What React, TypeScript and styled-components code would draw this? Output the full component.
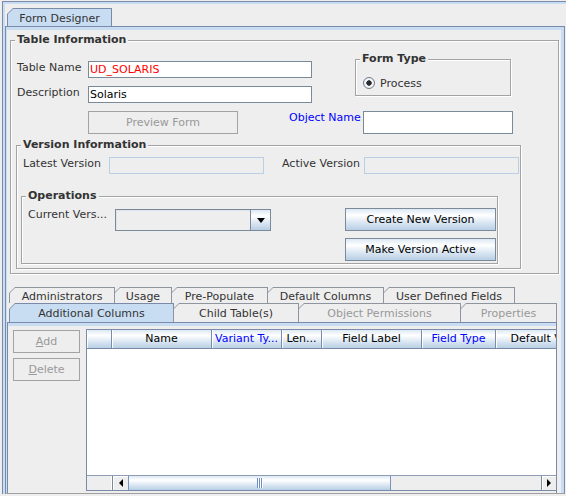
import styled, { createGlobalStyle } from 'styled-components'

const LINE = '#7a8aa8'
const CTRL = '#7a8a99'
const BAND = '#c8ddf2'
const PANEL = '#eeeeee'
const TEXT = '#333333'
const DISABLED = '#999999'
const ETCH = '#a3a3a3'
const OCEAN = 'linear-gradient(#dde8f3 0%, #ffffff 30%, #dde8f3 62%, #b8cfe5 100%)'

const GlobalStyle = createGlobalStyle`
  html, body {
    margin: 0;
    padding: 0;
    background: ${PANEL};
  }
  body {
    font-family: "DejaVu Sans", "Liberation Sans", sans-serif;
    font-size: 11px;
    color: ${TEXT};
  }
  * {
    box-sizing: border-box;
  }
`

const Screen = styled.div`
  width: 566px;
  height: 496px;
  overflow: hidden;
  background: ${PANEL};
`

const OuterPane = styled.div`
  width: 600px;
  margin: 1px 0 0 2px;
  border-top: 1px solid ${LINE};
  border-left: 1px solid ${LINE};
`

const OuterBand = styled.div`
  border-top: 2px solid ${BAND};
  border-left: 2px solid ${BAND};
`

const DesignerPane = styled.div`
  width: 560px;
`

const TabStrip = styled.div<{ $height: number }>`
  display: flex;
  align-items: flex-end;
  height: ${({ $height }) => $height}px;
  padding-left: 2px;
`

const TabEdge = styled.div<{ $width: number; $height: number; $selected?: boolean }>`
  flex: none;
  width: ${({ $width }) => $width}px;
  height: ${({ $height }) => $height}px;
  margin-right: -1px;
  padding: 1px 1px 0 1px;
  background: ${({ $selected }) => ($selected ? LINE : '#8e959e')};
  clip-path: polygon(0 6px, 6px 0, 100% 0, 100% 100%, 0 100%);
`

const TabFace = styled.div<{ $selected?: boolean; $disabled?: boolean }>`
  display: flex;
  align-items: center;
  justify-content: center;
  height: 100%;
  padding-top: 2px;
  line-height: 14px;
  white-space: nowrap;
  background: ${({ $selected }) => ($selected ? BAND : PANEL)};
  color: ${({ $disabled }) => ($disabled ? DISABLED : TEXT)};
  clip-path: polygon(0 5px, 5px 0, 100% 0, 100% 100%, 0 100%);
`

const DesignerContent = styled.div`
  border: 1px solid ${LINE};
  border-bottom-color: #a0a0a0;
`

const DesignerBand = styled.div`
  border-top: 3px solid ${BAND};
  border-left: 1px solid ${BAND};
  border-right: 3px solid ${BAND};
`

const DesignerInner = styled.div`
  width: 554px;
  height: 463px;
  padding-top: 10px;
`

const Group = styled.div<{ $width: number; $height: number }>`
  position: relative;
  flex: none;
  width: ${({ $width }) => $width}px;
  height: ${({ $height }) => $height}px;
  border: 1px solid ${ETCH};
  box-shadow: inset 1px 1px 0 #ffffff, 1px 1px 0 #ffffff;
`

const GroupTitle = styled.span`
  position: absolute;
  top: -8px;
  left: 4px;
  padding: 0 2px;
  background: ${PANEL};
  font-weight: bold;
  line-height: 14px;
  white-space: nowrap;
`

const TableInfo = styled(Group)`
  margin-left: 3px;
`

const TopSection = styled.div`
  display: flex;
  align-items: flex-start;
  height: 62px;
`

const LeftFields = styled.div`
  display: flex;
  flex-direction: column;
  gap: 8px;
  margin: 20px 0 0 6px;
`

const FormRow = styled.div`
  display: flex;
  align-items: flex-start;
`

const FieldLabel = styled.span<{ $width: number; $blue?: boolean }>`
  flex: none;
  width: ${({ $width }) => $width}px;
  line-height: 14px;
  white-space: nowrap;
  color: ${({ $blue }) => ($blue ? '#0000ff' : TEXT)};
`

const TextField = styled.div<{ $width: number; $height?: number; $red?: boolean }>`
  flex: none;
  width: ${({ $width }) => $width}px;
  height: ${({ $height }) => $height ?? 17}px;
  padding-left: 1px;
  border: 1px solid ${CTRL};
  background: #ffffff;
  line-height: 15px;
  white-space: nowrap;
  color: ${({ $red }) => ($red ? '#ff0000' : '#000000')};
`

const DisabledField = styled.div<{ $width: number }>`
  flex: none;
  width: ${({ $width }) => $width}px;
  height: 17px;
  border: 1px solid #b8cfe5;
  background: ${PANEL};
`

const FormTypeBox = styled(Group)`
  margin: 18px 0 0 43px;
`

const RadioRow = styled.div`
  display: flex;
  align-items: flex-start;
  margin: 17px 0 0 7px;
  line-height: 14px;
`

const Radio = styled.span`
  flex: none;
  width: 12px;
  height: 12px;
  margin-right: 5px;
  border: 1px solid #6e7c8c;
  border-radius: 50%;
  background: radial-gradient(circle at center, #2a2a2a 0 2.4px, #f6f8fb 3px, #dfe8f2 100%);
`

const ActionRow = styled.div`
  display: flex;
  align-items: flex-start;
  margin-top: 8px;
`

const Button = styled.div<{ $width: number; $disabled?: boolean }>`
  flex: none;
  display: flex;
  align-items: center;
  justify-content: center;
  width: ${({ $width }) => $width}px;
  height: 23px;
  padding-top: 1px;
  line-height: 14px;
  white-space: nowrap;
  border: 1px solid ${({ $disabled }) => ($disabled ? ETCH : CTRL)};
  background: ${({ $disabled }) => ($disabled ? PANEL : OCEAN)};
  color: ${({ $disabled }) => ($disabled ? DISABLED : '#000000')};
`

const PreviewButton = styled(Button)`
  margin-left: 77px;
`

const ObjectLabel = styled(FieldLabel)`
  margin-left: 51px;
`

const VersionBox = styled(Group)`
  margin: 11px 0 0 5px;
`

const VersionRow = styled.div`
  display: flex;
  align-items: flex-start;
  margin-top: 11px;
  padding-left: 6px;
`

const ActiveLabel = styled(FieldLabel)`
  margin-left: 18px;
`

const OperationsBox = styled(Group)`
  margin: 22px 0 0 4px;
`

const OperationsRow = styled.div`
  display: flex;
  align-items: flex-start;
  margin-top: 11px;
  padding-left: 6px;
`

const Combo = styled.div`
  flex: none;
  display: flex;
  width: 156px;
  height: 22px;
  margin-top: 1px;
  border: 1px solid ${CTRL};
`

const ComboField = styled.div`
  flex: 1;
  background: ${PANEL};
  border-right: 1px solid ${CTRL};
  box-shadow: inset 1px 1px 0 #dde3ea;
`

const ComboArrow = styled.div`
  flex: none;
  display: flex;
  align-items: center;
  justify-content: center;
  width: 19px;
  background: ${OCEAN};
`

const DownTriangle = styled.span`
  width: 0;
  height: 0;
  margin-top: 1px;
  border-left: 4.5px solid transparent;
  border-right: 4.5px solid transparent;
  border-top: 5px solid #000000;
`

const VersionButtons = styled.div`
  display: flex;
  flex-direction: column;
  gap: 7px;
  margin: 0 1px 0 auto;
`

const InnerPane = styled.div`
  margin-top: 13px;
`

const InnerContent = styled.div`
  display: flex;
  width: 550px;
  height: 171px;
  padding-top: 3px;
  border: 1px solid ${LINE};
  border-bottom: none;
  box-shadow: inset 0 3px 0 ${BAND};
`

const SideButtons = styled.div`
  flex: none;
  display: flex;
  flex-direction: column;
  gap: 5px;
  width: 78px;
  padding: 4px 0 0 5px;
`

const Mnemonic = styled.span`
  text-decoration: underline;
`

const TableScroll = styled.div`
  flex: none;
  display: flex;
  flex-direction: column;
  width: 470px;
  height: 162px;
  margin-top: 3px;
  overflow: hidden;
  border: 1px solid ${LINE};
  border-right: none;
`

const HeaderRow = styled.div`
  flex: none;
  display: flex;
  height: 19px;
  border-bottom: 1px solid ${LINE};
`

const HeaderCell = styled.div<{ $width: number; $blue?: boolean }>`
  flex: none;
  display: flex;
  align-items: center;
  justify-content: center;
  width: ${({ $width }) => $width}px;
  line-height: 14px;
  white-space: nowrap;
  overflow: hidden;
  border-right: 1px solid ${LINE};
  box-shadow: inset 1px 0 0 #ffffff;
  background: ${OCEAN};
  color: ${({ $blue }) => ($blue ? '#0000ff' : '#000000')};
`

const TableBody = styled.div`
  flex: 1;
  background: #ffffff;
`

const ScrollBar = styled.div`
  flex: none;
  display: flex;
  height: 15px;
  border-top: 1px solid #8d9db5;
`

const ScrollCorner = styled.div`
  flex: none;
  width: 25px;
  background: ${PANEL};
  border-right: 1px solid #ffffff;
`

const ScrollButton = styled.div<{ $width: number }>`
  flex: none;
  display: flex;
  align-items: center;
  justify-content: center;
  width: ${({ $width }) => $width}px;
  background: ${PANEL};
  border-left: 1px solid ${CTRL};
  box-shadow: inset 1px 1px 0 #ffffff;
`

const LeftTriangle = styled.span`
  width: 0;
  height: 0;
  border-top: 4px solid transparent;
  border-bottom: 4px solid transparent;
  border-right: 4px solid #000000;
`

const RightTriangle = styled.span`
  width: 0;
  height: 0;
  border-top: 4px solid transparent;
  border-bottom: 4px solid transparent;
  border-left: 4px solid #000000;
`

const ScrollThumb = styled.div`
  flex: none;
  display: flex;
  align-items: center;
  justify-content: center;
  width: 263px;
  border-left: 1px solid #7a94c0;
  border-right: 1px solid #7a94c0;
  background: ${OCEAN};
`

const Grip = styled.span`
  width: 6px;
  height: 10px;
  background: repeating-linear-gradient(90deg, #6f8fc4 0 1px, #ffffff 1px 2px);
`

const ScrollTrack = styled.div`
  flex: none;
  width: 150px;
  background: ${PANEL};
`

const backTabs = [
  { label: 'Administrators', width: 106 },
  { label: 'Usage', width: 58 },
  { label: 'Pre-Populate', width: 97 },
  { label: 'Default Columns', width: 117 },
  { label: 'User Defined Fields', width: 132 },
]

const frontTabs = [
  { label: 'Additional Columns', width: 165, selected: true },
  { label: 'Child Table(s)', width: 126 },
  { label: 'Object Permissions', width: 163, disabled: true },
  { label: 'Properties', width: 97, disabled: true },
]

const columns = [
  { label: '', width: 25 },
  { label: 'Name', width: 100 },
  { label: 'Variant Ty...', width: 70, blue: true },
  { label: 'Len...', width: 40 },
  { label: 'Field Label', width: 100 },
  { label: 'Field Type', width: 74, blue: true },
  { label: 'Default Value', width: 104 },
]

export default function App() {
  return (
    <Screen>
      <GlobalStyle />
      <OuterPane>
        <OuterBand>
          <DesignerPane>
            <TabStrip $height={22}>
              <TabEdge $width={105} $height={18} $selected>
                <TabFace $selected>Form Designer</TabFace>
              </TabEdge>
            </TabStrip>
            <DesignerContent>
              <DesignerBand>
                <DesignerInner>
                  <TableInfo $width={549} $height={234}>
                    <GroupTitle>Table Information</GroupTitle>
                    <TopSection>
                      <LeftFields>
                        <FormRow>
                          <FieldLabel $width={71}>Table Name</FieldLabel>
                          <TextField $width={224} $red>UD_SOLARIS</TextField>
                        </FormRow>
                        <FormRow>
                          <FieldLabel $width={71}>Description</FieldLabel>
                          <TextField $width={224}>Solaris</TextField>
                        </FormRow>
                      </LeftFields>
                      <FormTypeBox $width={156} $height={37}>
                        <GroupTitle>Form Type</GroupTitle>
                        <RadioRow>
                          <Radio />
                          Process
                        </RadioRow>
                      </FormTypeBox>
                    </TopSection>
                    <ActionRow>
                      <PreviewButton $width={150} $disabled>Preview Form</PreviewButton>
                      <ObjectLabel $width={74} $blue>Object Name</ObjectLabel>
                      <TextField $width={150} $height={23} />
                    </ActionRow>
                    <VersionBox $width={505} $height={124}>
                      <GroupTitle>Version Information</GroupTitle>
                      <VersionRow>
                        <FieldLabel $width={86}>Latest Version</FieldLabel>
                        <DisabledField $width={155} />
                        <ActiveLabel $width={82}>Active Version</ActiveLabel>
                        <DisabledField $width={155} />
                      </VersionRow>
                      <OperationsBox $width={477} $height={68}>
                        <GroupTitle>Operations</GroupTitle>
                        <OperationsRow>
                          <FieldLabel $width={87}>Current Vers...</FieldLabel>
                          <Combo>
                            <ComboField />
                            <ComboArrow>
                              <DownTriangle />
                            </ComboArrow>
                          </Combo>
                          <VersionButtons>
                            <Button $width={151}>Create New Version</Button>
                            <Button $width={151}>Make Version Active</Button>
                          </VersionButtons>
                        </OperationsRow>
                      </OperationsBox>
                    </VersionBox>
                  </TableInfo>

                  <InnerPane>
                    <TabStrip $height={16}>
                      {backTabs.map((tab) => (
                        <TabEdge key={tab.label} $width={tab.width} $height={16}>
                          <TabFace>{tab.label}</TabFace>
                        </TabEdge>
                      ))}
                    </TabStrip>
                    <TabStrip $height={19}>
                      {frontTabs.map((tab) => (
                        <TabEdge key={tab.label} $width={tab.width} $height={19} $selected={tab.selected}>
                          <TabFace $selected={tab.selected} $disabled={tab.disabled}>
                            {tab.label}
                          </TabFace>
                        </TabEdge>
                      ))}
                    </TabStrip>
                    <InnerContent>
                      <SideButtons>
                        <Button $width={67} $disabled>
                          <Mnemonic>A</Mnemonic>dd
                        </Button>
                        <Button $width={67} $disabled>
                          <Mnemonic>D</Mnemonic>elete
                        </Button>
                      </SideButtons>
                      <TableScroll>
                        <HeaderRow>
                          {columns.map((col, i) => (
                            <HeaderCell key={i} $width={col.width} $blue={col.blue}>
                              {col.label}
                            </HeaderCell>
                          ))}
                        </HeaderRow>
                        <TableBody />
                        <ScrollBar>
                          <ScrollCorner />
                          <ScrollButton $width={16}>
                            <LeftTriangle />
                          </ScrollButton>
                          <ScrollThumb>
                            <Grip />
                          </ScrollThumb>
                          <ScrollTrack />
                          <ScrollButton $width={15}>
                            <RightTriangle />
                          </ScrollButton>
                        </ScrollBar>
                      </TableScroll>
                    </InnerContent>
                  </InnerPane>
                </DesignerInner>
              </DesignerBand>
            </DesignerContent>
          </DesignerPane>
        </OuterBand>
      </OuterPane>
    </Screen>
  )
}
